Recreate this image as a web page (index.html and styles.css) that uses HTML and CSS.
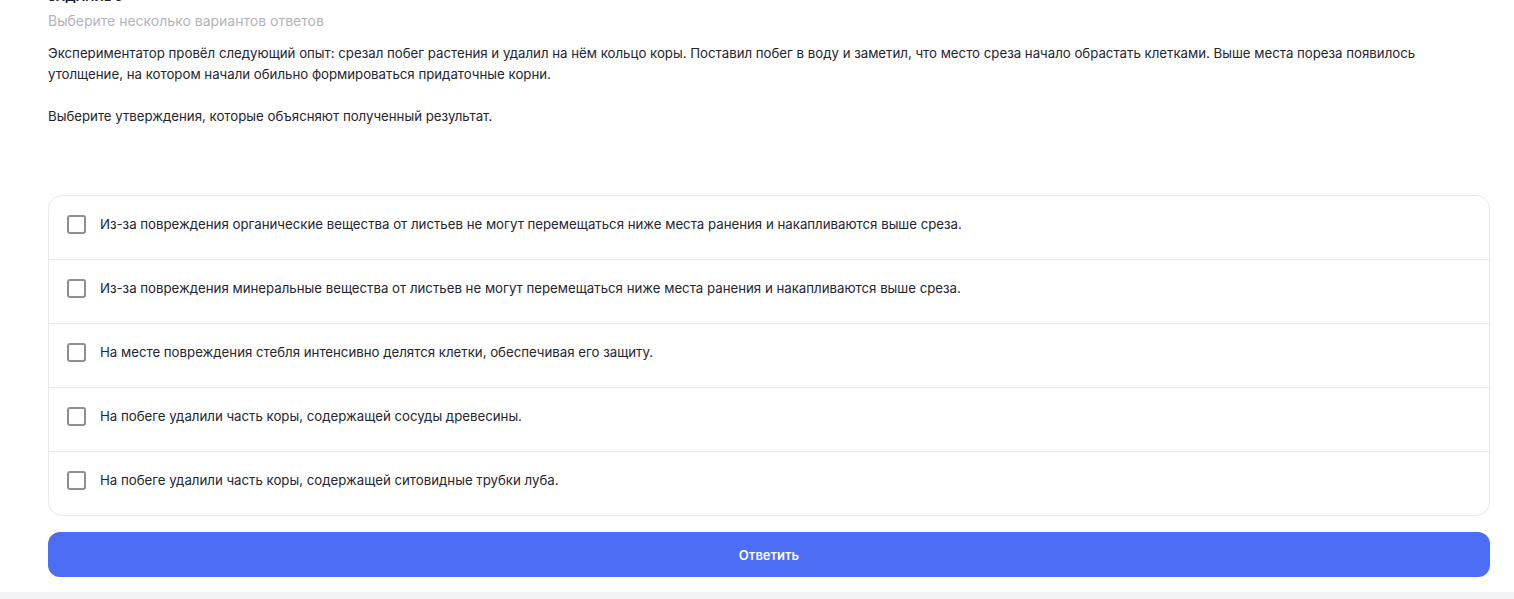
FILE: index.html
```html
<!DOCTYPE html>
<html lang="ru">
<head>
    <meta charset="UTF-8">
    <meta name="viewport" content="width=device-width, initial-scale=1.0">
    <title>Задание 5</title>
    <link rel="stylesheet" href="styles.css">
</head>
<body>
    <div class="task-card">
        <div class="task-number">Задание 5</div>
        <div class="task-hint">Выберите несколько вариантов ответов</div>

        <p class="task-text">
            Экспериментатор провёл следующий опыт: срезал побег растения и удалил на нём кольцо коры. Поставил побег в воду и заметил, что место среза начало обрастать клетками. Выше места пореза появилось утолщение, на котором начали обильно формироваться придаточные корни.<br><br>Выберите утверждения, которые объясняют полученный результат.
        </p>

        <ul class="answers">
            <li class="answer">
                <label><input type="checkbox"><span class="box"></span>Из-за повреждения органические вещества от листьев не могут перемещаться ниже места ранения и накапливаются выше среза.</label>
            </li>
            <li class="answer">
                <label><input type="checkbox"><span class="box"></span>Из-за повреждения минеральные вещества от листьев не могут перемещаться ниже места ранения и накапливаются выше среза.</label>
            </li>
            <li class="answer">
                <label><input type="checkbox"><span class="box"></span>На месте повреждения стебля интенсивно делятся клетки, обеспечивая его защиту.</label>
            </li>
            <li class="answer">
                <label><input type="checkbox"><span class="box"></span>На побеге удалили часть коры, содержащей сосуды древесины.</label>
            </li>
            <li class="answer">
                <label><input type="checkbox"><span class="box"></span>На побеге удалили часть коры, содержащей ситовидные трубки луба.</label>
            </li>
        </ul>

        <button class="submit-btn">Ответить</button>
    </div>
</body>
</html>
```

FILE: styles.css
```css
* {
    margin: 0;
    padding: 0;
    box-sizing: border-box;
}

body {
    font-family: 'Inter', 'Noto Sans', sans-serif;
    font-size: 13.24px;
    color: #24242f;
    background: #f2f2f7;
}

.task-card {
    background: #ffffff;
    margin-top: -13px;
    padding: 0 24px 15px 48px;
}

.task-number {
    font-size: 12px;
    font-weight: 700;
    text-transform: uppercase;
    line-height: 20px;
    letter-spacing: 0.3px;
}

.task-hint {
    font-size: 14px;
    color: #b3b3bd;
    line-height: 20px;
    margin-top: 4px;
}

.task-text {
    line-height: 21px;
    margin-top: 12px;
}

.answers {
    list-style: none;
    margin-top: 68px;
    border: 1px solid #e7e7ee;
    border-radius: 14px;
}

.answer {
    height: 64px;
    border-top: 1px solid #e7e7ee;
}

.answer:first-child {
    border-top: none;
    height: 63px;
}

.answer label {
    display: flex;
    align-items: center;
    height: 100%;
    padding: 0 0 7px 18px;
    gap: 14px;
    cursor: pointer;
}

.answer input {
    display: none;
}

.box {
    width: 19px;
    height: 19px;
    border: 2px solid #8d8d9b;
    border-radius: 3px;
    flex-shrink: 0;
}

.answer input:checked + .box {
    background: #4b6ef5;
    border-color: #4b6ef5;
}

.submit-btn {
    display: block;
    width: 100%;
    height: 45px;
    margin-top: 16px;
    border: none;
    border-radius: 12px;
    background: #4b6ef5;
    color: #ffffff;
    font-family: inherit;
    font-size: 13px;
    font-weight: 600;
    cursor: pointer;
}

.submit-btn:hover {
    background: #3f61e6;
}
```
